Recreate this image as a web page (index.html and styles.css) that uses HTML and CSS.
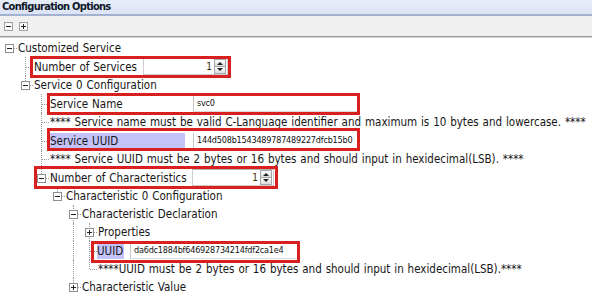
FILE: index.html
```html
<!DOCTYPE html>
<html lang="en">
<head>
  <meta charset="UTF-8">
  <title>Configuration Options</title>
  <link rel="stylesheet" href="styles.css">
</head>
<body>
  <div class="title">Configuration Options</div>
  <div class="toolbar">
    <span class="tool minus"></span>
    <span class="tool plus"></span>
  </div>

  <div class="tree">
    <div class="row">
      <span class="cell root"><i class="box minus"></i></span>
      <span class="label">Customized Service</span>
    </div>

    <div class="row tall">
      <span class="cell"></span>
      <span class="cell tee"></span>
      <span class="name name-services">Number of Services</span>
      <span class="spin spin-services">
        <span class="spin-val">1</span>
        <span class="spin-btns"><i class="up"></i><i class="down"></i></span>
      </span>
    </div>

    <div class="row">
      <span class="cell"></span>
      <span class="cell ell"><i class="box minus"></i></span>
      <span class="label">Service 0 Configuration</span>
    </div>

    <div class="row tall">
      <span class="cell"></span><span class="cell"></span>
      <span class="cell tee"></span>
      <span class="name name-wide">Service Name</span>
      <span class="field field-wide">svc0</span>
    </div>

    <div class="row">
      <span class="cell"></span><span class="cell"></span>
      <span class="cell tee"></span>
      <span class="label">**** Service name must be valid C-Language identifier and maximum is 10 bytes and lowercase. ****</span>
    </div>

    <div class="row tall">
      <span class="cell"></span><span class="cell"></span>
      <span class="cell tee"></span>
      <span class="name name-wide selected">Service UUID</span>
      <span class="field field-wide">144d508b1543489787489227dfcb15b0</span>
    </div>

    <div class="row">
      <span class="cell"></span><span class="cell"></span>
      <span class="cell tee"></span>
      <span class="label">**** Service UUID must be 2 bytes or 16 bytes and should input in hexidecimal(LSB). ****</span>
    </div>

    <div class="row tall">
      <span class="cell"></span><span class="cell"></span>
      <span class="cell ell"><i class="box minus"></i></span>
      <span class="name name-chars">Number of Characteristics</span>
      <span class="spin spin-chars">
        <span class="spin-val">1</span>
        <span class="spin-btns"><i class="up"></i><i class="down"></i></span>
      </span>
    </div>

    <div class="row">
      <span class="cell"></span><span class="cell"></span><span class="cell"></span>
      <span class="cell ell"><i class="box minus"></i></span>
      <span class="label">Characteristic 0 Configuration</span>
    </div>

    <div class="row">
      <span class="cell"></span><span class="cell"></span><span class="cell"></span><span class="cell"></span>
      <span class="cell tee"><i class="box minus"></i></span>
      <span class="label">Characteristic Declaration</span>
    </div>

    <div class="row">
      <span class="cell"></span><span class="cell"></span><span class="cell"></span><span class="cell"></span>
      <span class="cell pipe"></span>
      <span class="cell tee"><i class="box plus"></i></span>
      <span class="label">Properties</span>
    </div>

    <div class="row tall">
      <span class="cell"></span><span class="cell"></span><span class="cell"></span><span class="cell"></span>
      <span class="cell pipe"></span>
      <span class="cell tee"></span>
      <span class="name name-uuid selected">UUID</span>
      <span class="field field-uuid">da6dc1884bf646928734214fdf2ca1e4</span>
    </div>

    <div class="row">
      <span class="cell"></span><span class="cell"></span><span class="cell"></span><span class="cell"></span>
      <span class="cell pipe"></span>
      <span class="cell ell"></span>
      <span class="label">****UUID must be 2 bytes or 16 bytes and should input in hexidecimal(LSB).****</span>
    </div>

    <div class="row">
      <span class="cell"></span><span class="cell"></span><span class="cell"></span><span class="cell"></span>
      <span class="cell ell"><i class="box plus"></i></span>
      <span class="label">Characteristic Value</span>
    </div>

    <!-- red review marks drawn over the grid -->
    <div class="mark mark-services"></div>
    <div class="mark mark-name"></div>
    <div class="mark mark-uuid"></div>
    <div class="mark mark-chars"></div>
    <div class="mark mark-char-uuid"></div>
  </div>
</body>
</html>
```

FILE: styles.css
```css
body {
  margin: 0;
  background: #fff;
  color: #161616;
  font-family: "DejaVu Sans Condensed", "DejaVu Sans", sans-serif;
  font-size: 11.5px;
  word-spacing: 0.6px;
  overflow: hidden;
}

.title {
  height: 14px;
  line-height: 14px;
  padding-left: 2px;
  font-size: 11px;
  font-weight: bold;
  letter-spacing: -0.7px;
  word-spacing: 0;
  color: #101828;
  background: linear-gradient(#e8edfa, #dbe3f5);
  border-bottom: 2px solid #a2b1cf;
}

.toolbar {
  height: 20px;
  display: flex;
  align-items: center;
  gap: 6px;
  padding-left: 4px;
  background: #f0f0f0;
  border-bottom: 1px solid #9c9c9c;
  box-shadow: 0 1px 0 #d6d6d6;
}

.tool,
.box {
  position: relative;
  width: 7px;
  height: 7px;
  border: 1px solid #8f8f8f;
  background: #fff;
}
.tool::before,
.box::before {
  content: "";
  position: absolute;
  left: 1px;
  top: 3px;
  width: 5px;
  height: 1px;
  background: #222;
}
.tool.plus::after,
.box.plus::after {
  content: "";
  position: absolute;
  left: 3px;
  top: 1px;
  width: 1px;
  height: 5px;
  background: #222;
}
.tool {
  background: #fbfbfb;
  border-color: #a0a0a0;
}

.tree {
  position: relative;
  padding: 2px 0 0 1px;
}

.row {
  height: 18px;
  display: flex;
  align-items: center;
  white-space: nowrap;
}
.row.tall {
  height: 19px;
}

.cell {
  position: relative;
  flex: none;
  width: 16px;
  height: 100%;
}
.tee::before,
.pipe::before,
.ell::before {
  content: "";
  position: absolute;
  left: 8px;
  top: 0;
  bottom: 0;
  border-left: 1px dotted #9a9a9a;
}
.ell::before {
  bottom: 50%;
}
.tee::after,
.ell::after,
.root::after {
  content: "";
  position: absolute;
  left: 9px;
  right: 0;
  top: 50%;
  border-top: 1px dotted #9a9a9a;
}
.cell .box {
  position: absolute;
  left: 4px;
  top: calc(50% - 4px);
  z-index: 1;
}

.label {
  margin-left: 1px;
}

.name {
  flex: none;
  height: 16px;
  line-height: 16px;
}
.name.selected {
  background: #c3c3fa;
}
.name-services {
  width: 109px;
  padding-left: 1px;
}
.name-wide {
  width: 135px;
  margin: 0 8px 0 1px;
}
.name-chars {
  width: 142px;
  margin-left: 1px;
}
.name-uuid {
  width: 27px;
  margin-right: 6px;
}

.field {
  flex: none;
  box-sizing: border-box;
  height: 16px;
  line-height: 15px;
  padding-left: 3px;
  font-size: 9px;
  letter-spacing: -0.2px;
  word-spacing: 0;
  color: #111;
  border-left: 1px solid #c6c6c6;
  border-bottom: 1px solid #dadada;
}
.field-wide {
  width: 164px;
}
.field-uuid {
  width: 167px;
}

.spin {
  flex: none;
  box-sizing: border-box;
  height: 17px;
  display: flex;
  background: #fff;
  border: 1px solid #cdcdcd;
  border-top-color: #b4b4b4;
}
.spin-services {
  width: 85px;
}
.spin-chars {
  width: 82px;
}
.spin-val {
  flex: 1;
  text-align: right;
  padding-right: 2px;
  font-size: 10px;
  line-height: 15px;
  color: #3a3000;
}
.spin-btns {
  width: 10px;
  display: flex;
  flex-direction: column;
  border: 1px solid #a6a6a6;
  margin: 0 1px 0 0;
}
.spin-btns i {
  position: relative;
  flex: 1;
  background: linear-gradient(#fdfdfd, #dedede);
}
.spin-btns i + i {
  border-top: 1px solid #a6a6a6;
}
.spin-btns i::before {
  content: "";
  position: absolute;
  left: 2px;
  top: 2px;
  border: 3px solid transparent;
}
.spin-btns .up::before {
  top: -1px;
  border-bottom-color: #222;
}
.spin-btns .down::before {
  top: 1px;
  border-top-color: #222;
}

.mark {
  position: absolute;
  border: 3px solid #d8201f;
  box-sizing: border-box;
}
.mark-services {
  left: 30px;
  top: 19px;
  width: 201px;
  height: 22px;
}
.mark-name {
  left: 47px;
  top: 56px;
  width: 313px;
  height: 22px;
}
.mark-uuid {
  left: 47px;
  top: 91px;
  width: 313px;
  height: 23px;
}
.mark-chars {
  left: 34px;
  top: 129px;
  width: 244px;
  height: 23px;
}
.mark-char-uuid {
  left: 91px;
  top: 204px;
  width: 209px;
  height: 22px;
}
```
